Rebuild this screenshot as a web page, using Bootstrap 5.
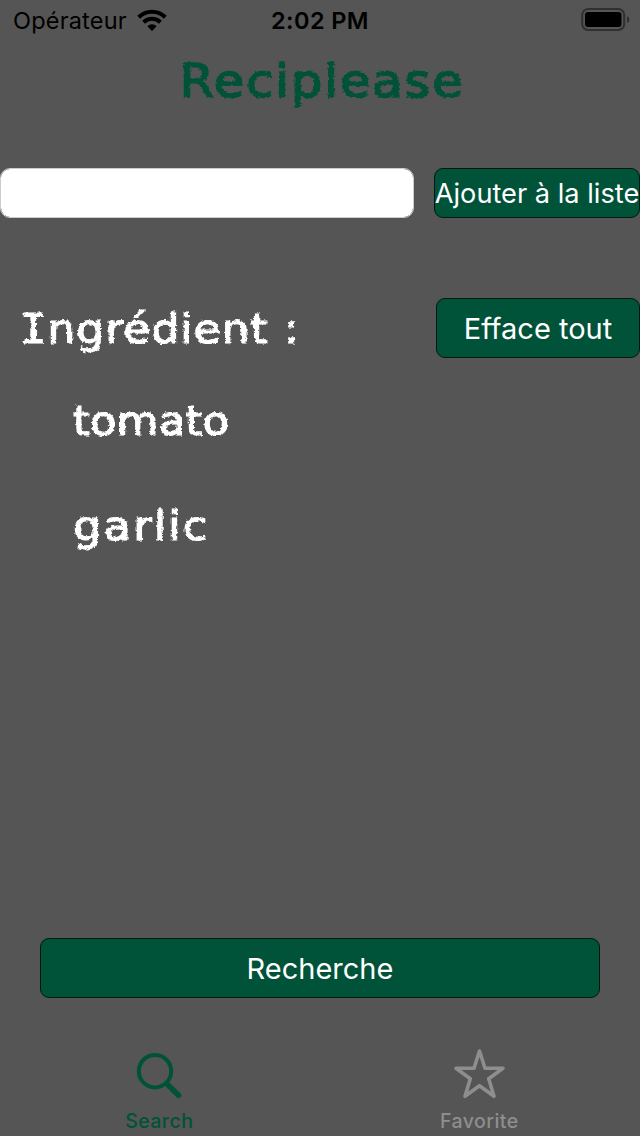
<!DOCTYPE html>
<html lang="fr">
<head>
<meta charset="utf-8">
<meta name="viewport" content="width=device-width, initial-scale=1">
<title>Reciplease</title>
<link href="https://cdn.jsdelivr.net/npm/bootstrap@5.3.0/dist/css/bootstrap.min.css" rel="stylesheet">
<style>
  body { background: #555; font-family: Inter, sans-serif; width: 640px; height: 1136px; overflow: hidden; }
  .status-bar { height: 40px; font-size: 23.5px; line-height: 40px; color: #000; }
  .status-side { width: 200px; }
  .carrier { margin-left: 13px; letter-spacing: .2px; padding-top: 2px; }
  .wifi { margin-left: 10px; }
  .clock { letter-spacing: .4px; padding-top: 2px; }
  .chalk { font-family: Chalkduster, "DejaVu Sans", sans-serif; font-size: 40px; line-height: 50px; color: #fff; white-space: pre; -webkit-text-stroke: 1.2px currentColor; filter: url(#chalk-edge); transform-origin: left center; }
  .chalk .serif-i { font-family: Chalkduster, "DejaVu Sans Mono", monospace; }
  .app-title { font-size: 46px; line-height: 82px; height: 80px; color: #005239; padding-left: 4px; letter-spacing: 1.9px; -webkit-text-stroke: 1.6px currentColor; transform: scaleX(1.07); transform-origin: center; }
  .heading { letter-spacing: .9px; margin-top: 6px; margin-left: -2px; transform: scaleX(1.1); }
  .tomato { padding-top: 38px; letter-spacing: .4px; transform: scaleX(1.07); }
  .garlic { padding-top: 55px; letter-spacing: 1.9px; transform: scaleX(1.12); }
  .btn-green, .btn-green:hover { background: #005239; color: #fff; border: 1px solid #00180f; border-radius: 9px; font-size: 29px; line-height: 1; padding: 0; white-space: nowrap; }
  .add-row { height: 50px; margin-top: 48px; gap: 20px; }
  .ingredient-input { width: 414px; height: 50px; border: 1px solid #ccc; border-radius: 10px; }
  .btn-add, .btn-add:hover { width: 206px; font-size: 27.2px; padding-top: 2px; }
  .list-head { height: 60px; margin-top: 80px; padding-left: 22px; }
  .btn-clear { width: 204px; }
  .ingredients { height: 580px; padding-left: 73px; }
  .btn-search { height: 60px; margin: 0 40px; }
  .tabs { height: 98px; margin-top: 40px; font-size: 19.5px; font-weight: 500; line-height: 26px; }
  .tab-link { color: #8e8e8e; }
  .tab-link.active { color: #005239; }
  .tab-text { letter-spacing: .45px; margin-right: 1.5px; }
</style>
</head>
<body class="d-flex flex-column">
<svg width="0" height="0" class="position-absolute" aria-hidden="true">
  <filter id="chalk-edge" x="-5%" y="-5%" width="110%" height="110%">
    <feTurbulence type="fractalNoise" baseFrequency=".35" numOctaves="2" seed="4" result="n"/>
    <feDisplacementMap in="SourceGraphic" in2="n" scale="3.6" xChannelSelector="R" yChannelSelector="G"/>
  </filter>
</svg>
<header class="status-bar d-flex justify-content-between align-items-center flex-shrink-0">
  <div class="status-side d-flex align-items-center">
    <span class="carrier">Opérateur</span>
    <svg class="wifi" width="30" height="23" viewBox="0 0 30 23">
      <g fill="none" stroke="#000" stroke-width="4.2"><path d="M1.7 8.2A19 19 0 0 1 28.3 8.2"/><path d="M6.6 13.2A12 12 0 0 1 23.4 13.2"/></g>
      <path d="M10.3 17.2A6.8 6.8 0 0 1 19.7 17.2L15 22Z"/>
    </svg>
  </div>
  <div class="clock fw-semibold">2:02 PM</div>
  <div class="status-side d-flex justify-content-end">
    <svg width="59" height="40" viewBox="0 0 59 40"><rect x="1.2" y="9" width="42" height="21" rx="6" fill="none" stroke="#303030" stroke-width="2"/><rect x="4" y="12" width="36.5" height="15" rx="3.2"/><path d="M46 16q2.4 1 2.4 3.5T46 23Z" fill="#303030"/></svg>
  </div>
</header>
<h1 class="chalk app-title align-self-center m-0 fw-normal">Reciplease</h1>
<main>
  <div class="add-row d-flex">
    <input class="ingredient-input form-control" type="text" aria-label="Ingrédient">
    <button class="btn btn-green btn-add d-flex align-items-center justify-content-center">Ajouter à la liste</button>
  </div>
  <div class="list-head d-flex justify-content-between">
    <div class="chalk heading"><span class="serif-i">I</span>ngrédient :</div>
    <button class="btn btn-green btn-clear">Efface tout</button>
  </div>
  <ul class="ingredients list-unstyled m-0 d-flex flex-column align-items-start">
    <li class="chalk tomato">tomato</li>
    <li class="chalk garlic">garlic</li>
  </ul>
  <div class="d-grid"><button class="btn btn-green btn-search">Recherche</button></div>
</main>
<nav class="tabs d-flex">
  <a class="tab-link active w-50 d-flex flex-column align-items-center text-decoration-none">
    <svg width="60" height="70" viewBox="0 0 60 70" fill="none" stroke="currentColor"><circle cx="25" cy="33.2" r="16.2" stroke-width="4"/><path d="M37 46L48.5 57.3" stroke-width="5.5" stroke-linecap="round"/></svg>
    <span class="tab-text">Search</span>
  </a>
  <a class="tab-link w-50 d-flex flex-column align-items-center text-decoration-none">
    <svg width="60" height="70" viewBox="0 0 60 70" fill="none" stroke="currentColor" stroke-width="3.6" stroke-linejoin="round"><path d="M29.5 13L35 30.2H53L38.7 40.8L44 58.2L29.5 47.7L15 58.2L20.3 40.8L6 30.2H24Z"/></svg>
    <span class="tab-text">Favorite</span>
  </a>
</nav>
<script src="https://cdn.jsdelivr.net/npm/bootstrap@5.3.0/dist/js/bootstrap.bundle.min.js"></script>
</body>
</html>
